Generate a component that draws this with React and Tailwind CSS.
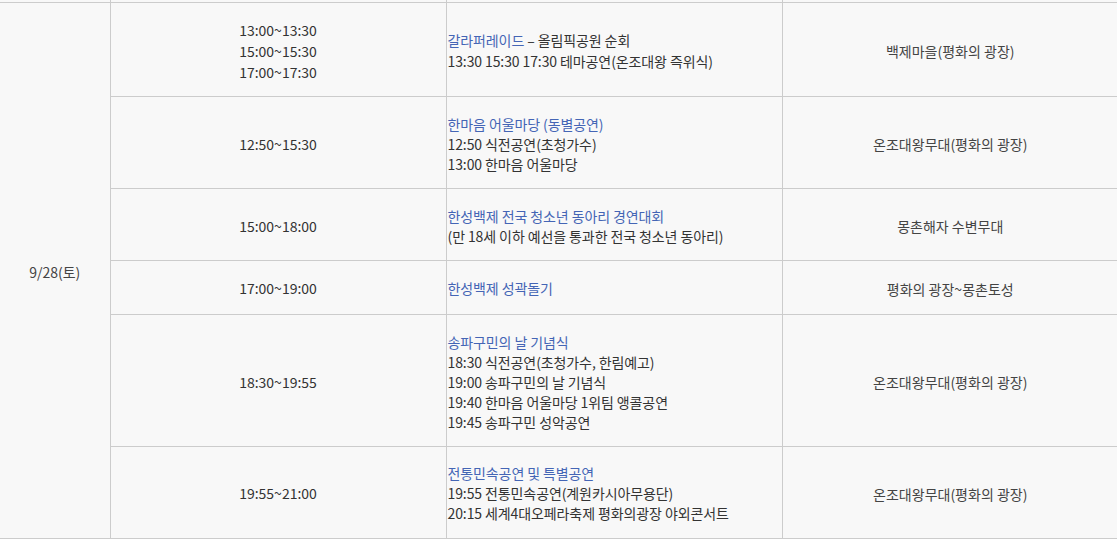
import React from 'react';

const rows = [
  {
    h: 'h-[94px]',
    lead: 'leading-[21px] pt-[4px]',
    time: ['13:00~13:30', '15:00~15:30', '17:00~17:30'],
    program: [
      <>
        <span className="text-[#4465b5]">갈라퍼레이드</span> – 올림픽공원 순회
      </>,
      '13:30 15:30 17:30 테마공연(온조대왕 즉위식)',
    ],
    place: '백제마을(평화의 광장)',
  },
  {
    h: 'h-[92px]',
    lead: 'leading-5 pt-[3px]',
    time: ['12:50~15:30'],
    program: [
      <span className="text-[#4465b5]">한마음 어울마당 (동별공연)</span>,
      '12:50 식전공연(초청가수)',
      '13:00 한마음 어울마당',
    ],
    place: '온조대왕무대(평화의 광장)',
  },
  {
    h: 'h-[72px]',
    lead: 'leading-5 pt-[3px]',
    time: ['15:00~18:00'],
    program: [
      <span className="text-[#4465b5]">한성백제 전국 청소년 동아리 경연대회</span>,
      '(만 18세 이하 예선을 통과한 전국 청소년 동아리)',
    ],
    place: '몽촌해자 수변무대',
  },
  {
    h: 'h-[54px]',
    lead: 'leading-5 pt-[2px]',
    time: ['17:00~19:00'],
    program: [<span className="text-[#4465b5]">한성백제 성곽돌기</span>],
    place: '평화의 광장~몽촌토성',
  },
  {
    h: 'h-[132px]',
    lead: 'leading-5 pt-[3px]',
    time: ['18:30~19:55'],
    program: [
      <span className="text-[#4465b5]">송파구민의 날 기념식</span>,
      '18:30 식전공연(초청가수, 한림예고)',
      '19:00 송파구민의 날 기념식',
      '19:40 한마음 어울마당 1위팀 앵콜공연',
      '19:45 송파구민 성악공연',
    ],
    place: '온조대왕무대(평화의 광장)',
  },
  {
    h: 'h-[92px]',
    lead: 'leading-5 pt-[2px]',
    time: ['19:55~21:00'],
    program: [
      <span className="text-[#4465b5]">전통민속공연 및 특별공연</span>,
      '19:55 전통민속공연(계원카시아무용단)',
      '20:15 세계4대오페라축제 평화의광장 야외콘서트',
    ],
    place: '온조대왕무대(평화의 광장)',
  },
];

export default function App() {
  return (
    <div
      className="min-h-screen bg-[#f8f8f8] text-[14px] text-[#333] overflow-hidden"
      style={{ fontFamily: '"Noto Sans CJK KR", "Noto Sans", sans-serif' }}
    >
      <table className="table-fixed border-collapse w-[1118px]">
        <colgroup>
          <col className="w-[110px]" />
          <col className="w-[336px]" />
          <col className="w-[336px]" />
          <col className="w-[336px]" />
        </colgroup>
        <tbody>
          {/* tail of the previous row */}
          <tr className="h-[2px]">
            <td className="p-0 border-r border-[#cccccc]"></td>
            <td className="p-0 border-x border-[#cccccc]"></td>
            <td className="p-0 border-x border-[#cccccc]"></td>
            <td className="p-0 border-l border-[#cccccc]"></td>
          </tr>
          {rows.map((row, i) => (
            <tr key={i} className={`${row.h} border-t border-[#cccccc]`}>
              {i === 0 && (
                <td
                  rowSpan={rows.length}
                  className="p-0 pt-[4px] text-center align-middle text-[#444] border-r border-b border-t border-[#cccccc]"
                >
                  9/28(토)
                </td>
              )}
              <td
                className={`p-0 text-center align-middle border-x border-b border-[#cccccc] text-[#333] ${row.lead}`}
              >
                {row.time.map((t) => (
                  <div key={t}>{t}</div>
                ))}
              </td>
              <td
                className={`p-0 pl-[1px] text-left align-middle border-x border-b border-[#cccccc] text-[#333] tracking-[-0.1px] ${row.lead}`}
              >
                {row.program.map((p, j) => (
                  <div key={j}>{p}</div>
                ))}
              </td>
              <td className="p-0 pt-[3px] text-center align-middle leading-5 border-l border-b border-[#cccccc] text-[#444]">
                {row.place}
              </td>
            </tr>
          ))}
        </tbody>
      </table>
    </div>
  );
}
